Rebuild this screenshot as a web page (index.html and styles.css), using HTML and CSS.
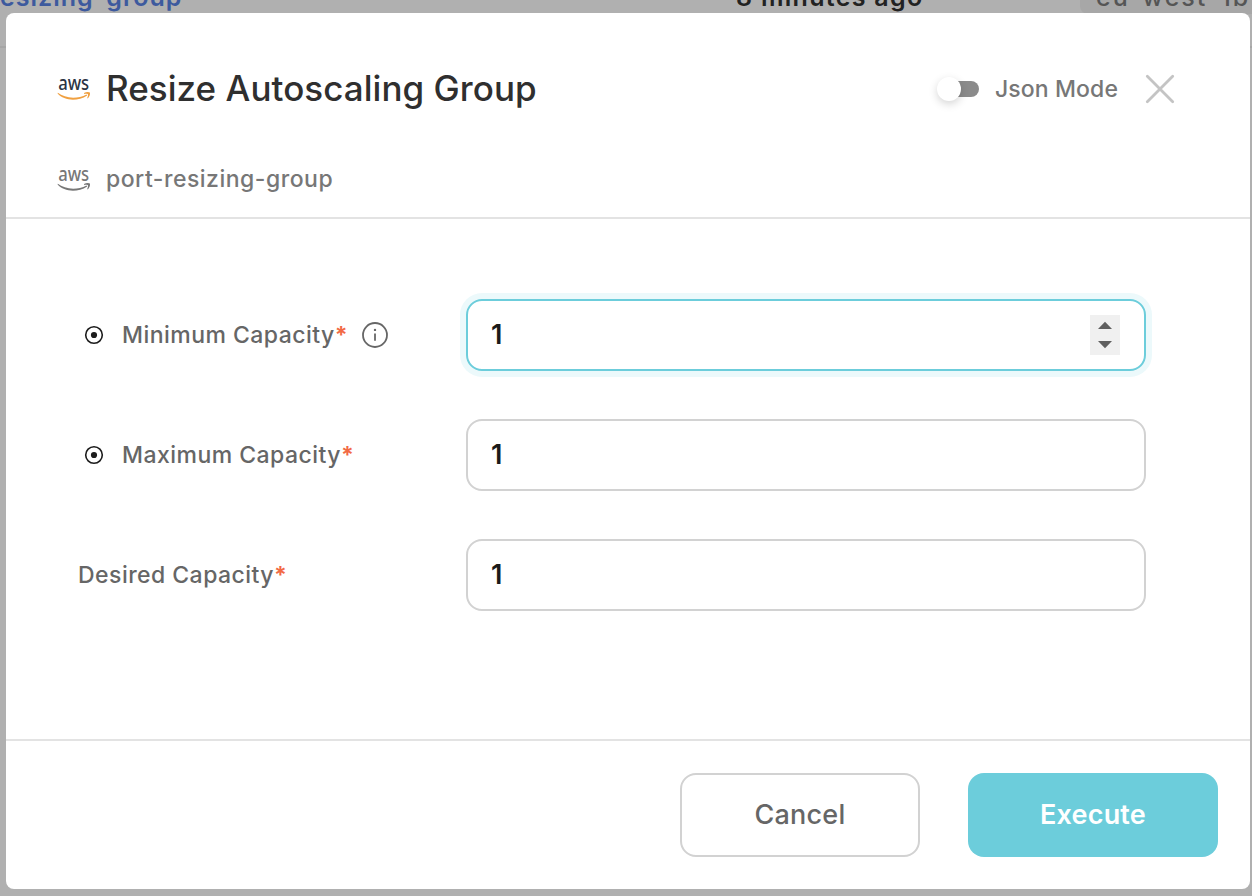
FILE: index.html
```html
<!DOCTYPE html>
<html lang="en">
<head>
<meta charset="utf-8">
<title>Resize Autoscaling Group</title>
<link rel="stylesheet" href="styles.css">
</head>
<body>
<div class="page-row">
  <span class="cell cell-name">esizing-group</span>
  <span class="cell cell-time">8 minutes ago</span>
  <span class="cell cell-zone">eu-west-1b</span>
</div>
<main class="modal">
  <header class="modal-header">
    <div class="title-row">
      <svg class="aws" viewBox="0 0 34 24"><text class="aws-word" x="1.2" y="13.4" textLength="31" lengthAdjust="spacingAndGlyphs">aws</text><path class="aws-smile" d="M0.8 15.8 C8 21.4 20 22.4 29.5 17.4 L30.2 18.4 C20 25 7 23.6 0.6 16.5Z"/><path class="aws-smile" d="M27 16 C29 14.8 32 14.8 32.9 15.6 C33.4 17.3 32.5 20 30.8 21.4 L30.2 21 C30.8 19.6 31.3 17.8 30.9 17.2 C30.2 16.7 28.5 16.8 27.1 16.9Z"/></svg>
      <h1 class="title">Resize Autoscaling Group</h1>
      <div class="toggle"><span class="track"></span><span class="knob"></span></div>
      <span class="mode">Json Mode</span>
      <svg class="close" viewBox="0 0 30 30"><path d="M2.3 2.3 27.7 27.7M27.7 2.3 2.3 27.7"/></svg>
    </div>
    <div class="entity-row">
      <svg class="aws aws-gray" viewBox="0 0 34 24"><text class="aws-word" x="1.2" y="13.4" textLength="31" lengthAdjust="spacingAndGlyphs">aws</text><path class="aws-smile" d="M0.8 15.8 C8 21.4 20 22.4 29.5 17.4 L30.2 18.4 C20 25 7 23.6 0.6 16.5Z"/><path class="aws-smile" d="M27 16 C29 14.8 32 14.8 32.9 15.6 C33.4 17.3 32.5 20 30.8 21.4 L30.2 21 C30.8 19.6 31.3 17.8 30.9 17.2 C30.2 16.7 28.5 16.8 27.1 16.9Z"/></svg>
      <span class="entity">port-resizing-group</span>
    </div>
  </header>
  <section class="fields">
    <div class="field">
      <div class="label-box">
        <svg class="dot" viewBox="0 0 20 20"><circle class="ring" cx="10" cy="10" r="8.3"/><circle cx="10" cy="10" r="3.1"/></svg>
        <span class="label">Minimum Capacity</span><span class="star">*</span>
        <svg class="info" viewBox="0 0 28 28"><circle class="ring" cx="14" cy="14" r="12"/><path class="stem" d="M14 12.4V19.8"/><circle cx="14" cy="8.9" r="1.2"/></svg>
      </div>
      <div class="input focused"><span class="value">1</span>
        <svg class="spinner" viewBox="0 0 30 40"><path d="M8 14 15 6.8 22 14ZM8 26 15 33.2 22 26Z"/></svg>
      </div>
    </div>
    <div class="field">
      <div class="label-box">
        <svg class="dot" viewBox="0 0 20 20"><circle class="ring" cx="10" cy="10" r="8.3"/><circle cx="10" cy="10" r="3.1"/></svg>
        <span class="label">Maximum Capacity</span><span class="star">*</span>
      </div>
      <div class="input"><span class="value">1</span></div>
    </div>
    <div class="field">
      <div class="label-box plain"><span class="label">Desired Capacity</span><span class="star">*</span></div>
      <div class="input"><span class="value">1</span></div>
    </div>
  </section>
  <footer class="modal-footer">
    <button class="btn cancel">Cancel</button>
    <button class="btn execute">Execute</button>
  </footer>
</main>
</body>
</html>
```
FILE: styles.css
```css
* { box-sizing: border-box; }
body {
  margin: 0;
  height: 896px;
  overflow: hidden;
  background: #b0b0b0;
  font-family: Inter, "Liberation Sans", sans-serif;
  font-weight: 500;
}
svg { display: block; flex: none; }

/* table row behind the dialog */
.page-row {
  display: flex;
  height: 87px;
  margin-top: -39px;
  border-bottom: 2px solid #a6a6a6;
}
.cell { flex: none; height: 53px; line-height: 72px; font-size: 25px; white-space: nowrap; }
.cell-name { width: 736px; color: #3d5a9e; font-weight: 600; letter-spacing: 1px; }
.cell-time { width: 344px; color: #222; font-weight: 600; letter-spacing: 1.3px; }
.cell-zone { width: 200px; padding-left: 16px; background: #a7a7a7; color: #555; border-radius: 8px; letter-spacing: 2px; }

.modal {
  position: absolute;
  left: 6px;
  top: 13px;
  width: 1244px;
  height: 876px;
  display: flex;
  flex-direction: column;
  background: #fff;
  border-radius: 8px;
}
.modal-header {
  height: 206px;
  padding: 56px 75px 0 51px;
  border-bottom: 2px solid #e3e3e3;
}
.title-row, .entity-row { display: flex; align-items: center; height: 40px; }
.entity-row { margin-top: 50px; }
.aws { width: 34px; height: 24px; margin-right: 15px; }
.aws-word { font: 500 19px "Noto Sans", sans-serif; fill: #2b3444; }
.aws-smile { fill: #f0a040; }
.aws-gray { margin-top: 2px; }
.aws-gray .aws-word, .aws-gray .aws-smile { fill: #777; }
.title { margin: 0; padding-bottom: 2px; font-size: 35px; font-weight: 500; letter-spacing: 0.04px; color: #2f2f2f; white-space: nowrap; }
.toggle { display: flex; align-items: center; margin-left: auto; height: 24px; }
.track { order: 2; width: 29px; height: 16px; margin-left: -11px; border-radius: 0 8px 8px 0; background: #8b8b8b; }
.knob { order: 1; position: relative; z-index: 1; width: 24px; height: 24px; border-radius: 50%; background: #fff; box-shadow: 0 3px 8px rgba(0,0,0,.17); }
.mode { width: 124px; margin: 0 26px 0 16px; font-size: 23px; letter-spacing: 0.1px; color: #777; white-space: nowrap; }
.close { width: 30px; height: 30px; }
.close path { stroke: #c4c4c4; stroke-width: 2.8; stroke-linecap: round; }
.entity { font-size: 23px; letter-spacing: 0.5px; color: #777; }

.fields { flex: 1; display: flex; flex-direction: column; gap: 48px; padding: 80px 104px 0 72px; }
.field { display: flex; height: 72px; }
.label-box { display: flex; align-items: center; width: 388px; padding-left: 6px; font-size: 23px; color: #666; white-space: nowrap; }
.label { letter-spacing: 0.46px; }
.plain { padding-left: 0; }
.dot { width: 20px; height: 20px; margin-right: 18px; fill: #1c1c1c; }
.dot .ring { fill: none; stroke: #1c1c1c; stroke-width: 1.6; }
.star { color: #f26a45; font-weight: 700; }
.info { width: 28px; height: 28px; margin-left: 13px; fill: #666; }
.info .ring { fill: none; stroke: #666; stroke-width: 1.8; }
.info .stem { stroke: #666; stroke-width: 1.8; }
.input {
  display: flex;
  align-items: center;
  justify-content: space-between;
  width: 680px;
  padding: 0 24px 0 23px;
  border: 2px solid #d2d2d2;
  border-radius: 16px;
  font-size: 27px;
  font-weight: 600;
  color: #1a1a1a;
}
.value { padding-bottom: 2px; }
.focused { border-color: #6ccddb; box-shadow: 0 0 0 6px #ecf9fb; }
.spinner { width: 30px; height: 40px; background: #f0f0f0; fill: #606060; }

.modal-footer { display: flex; justify-content: flex-end; gap: 48px; height: 150px; padding: 32px; border-top: 2px solid #e3e3e3; }
.btn { height: 84px; padding: 0 0 2px; border: 0; border-radius: 16px; font: 500 27px Inter, sans-serif; letter-spacing: 0.2px; }
.cancel { width: 240px; border: 2px solid #d2d2d2; background: #fff; color: #666; }
.execute { width: 250px; background: #6ccddb; color: #fff; font-weight: 600; }
```
